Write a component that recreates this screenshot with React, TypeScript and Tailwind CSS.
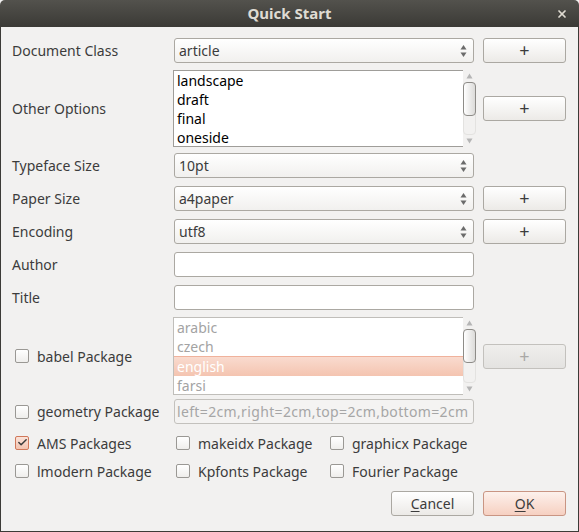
import { Check, X } from "lucide-react"

const font = { fontFamily: '"Noto Sans", "DejaVu Sans", sans-serif' }

function Arrows() {
  return (
    <svg width="7" height="14" viewBox="0 0 7 14" className="shrink-0">
      <path d="M3.5 1 L6.5 5.5 L0.5 5.5 Z" fill="#6b6b6b" />
      <path d="M3.5 13 L6.5 8.5 L0.5 8.5 Z" fill="#6b6b6b" />
    </svg>
  )
}

function Combo({ value }: { value: string }) {
  return (
    <div className="h-[25px] w-[300px] flex items-center justify-between pl-[4px] pr-[6px] rounded-[3px] border border-[#aba8a2] bg-gradient-to-b from-white to-[#f1f0ee] text-[14px] text-[#3c3c3c]">
      <span>{value}</span>
      <Arrows />
    </div>
  )
}

function PlusButton({ disabled = false }: { disabled?: boolean }) {
  return (
    <div
      className={
        disabled
          ? "h-[25px] w-[83px] flex items-center justify-center rounded-[3px] border border-[#c3c1bd] bg-gradient-to-b from-[#efeeec] to-[#e4e3e1] text-[18px] text-[#a9a8a6]"
          : "h-[25px] w-[83px] flex items-center justify-center rounded-[3px] border border-[#aba8a2] bg-gradient-to-b from-white to-[#eceae7] text-[18px] text-[#3c3c3c]"
      }
    >
      +
    </div>
  )
}

function TextInput({ value = "", muted = false }: { value?: string; muted?: boolean }) {
  return (
    <div
      className={
        muted
          ? "h-[25px] w-[300px] flex items-center px-[2px] rounded-[3px] border border-[#c3c1bd] bg-[#f4f3f2] text-[14px] tracking-[0.35px] text-[#a6a6a6] overflow-hidden whitespace-nowrap"
          : "h-[25px] w-[300px] flex items-center px-[5px] rounded-[3px] border border-[#aba8a2] bg-white text-[14px] text-[#3c3c3c]"
      }
    >
      {value}
    </div>
  )
}

function ScrollBar() {
  return (
    <div className="w-[13px] h-full flex flex-col items-center">
      <svg width="7" height="6" viewBox="0 0 7 6" className="mt-[3px] shrink-0">
        <path d="M3.5 0.5 L6.5 5.5 L0.5 5.5 Z" fill="#b5b5b5" />
      </svg>
      <div className="flex-1 w-[13px] mt-[3px] mb-[3px] flex flex-col rounded-[4px] border border-[#e3e2e0]">
        <div className="h-[34px] -mx-px -mt-px rounded-[4px] border border-[#8e8c88] bg-gradient-to-r from-white to-[#dcdbd9]" />
      </div>
      <svg width="7" height="6" viewBox="0 0 7 6" className="mb-[3px] shrink-0">
        <path d="M3.5 5.5 L6.5 0.5 L0.5 0.5 Z" fill="#b5b5b5" />
      </svg>
    </div>
  )
}

function Box({ checked = false }: { checked?: boolean }) {
  return checked ? (
    <div className="w-[14px] h-[14px] shrink-0 rounded-[2px] border border-[#d0785a] bg-gradient-to-b from-[#fbe3d9] to-[#f2c3b0] flex items-center justify-center">
      <Check size={13} strokeWidth={3.2} color="#3a3a3a" className="-mt-[2px] ml-[1px]" />
    </div>
  ) : (
    <div className="w-[14px] h-[14px] shrink-0 rounded-[2px] border border-[#9a9894] bg-gradient-to-b from-white to-[#efeeec]" />
  )
}

function CheckItem({ label, checked = false, w }: { label: string; checked?: boolean; w: string }) {
  return (
    <div className={"flex items-center gap-[8px] " + w}>
      <Box checked={checked} />
      <span>{label}</span>
    </div>
  )
}

const rowCls = "grid grid-cols-[153px_300px_83px] gap-x-[9px] items-center"

export default function App() {
  const options = ["landscape", "draft", "final", "oneside"]
  const langs = ["arabic", "czech", "english", "farsi"]

  return (
    <div className="w-[579px] h-[532px] bg-[#f2f1f0] flex flex-col" style={font}>
      {/* title bar */}
      <div className="h-[27px] shrink-0 rounded-t-[5px] bg-gradient-to-b from-[#53524d] to-[#3b3a36] flex items-center relative">
        <span className="flex-1 text-center text-[15px] font-bold text-[#dfdbd2]">Quick Start</span>
        <X size={12} strokeWidth={3.5} color="#dfdbd2" className="absolute right-[11px] top-[8px]" />
      </div>

      <div className="flex-1 flex flex-col border-x border-b border-[#3c3b37] pl-[11px] text-[14px] text-[#3c3c3c]">
        <div className={rowCls + " mt-[11px]"}>
          <span>Document Class</span>
          <Combo value="article" />
          <PlusButton />
        </div>

        <div className={rowCls + " mt-[7px]"}>
          <span>Other Options</span>
          <div className="h-[77px] w-[303px] -ml-px flex">
            <div className="w-[290px] h-full border border-[#9f9d99] border-r-0 bg-white pl-[3px] text-black overflow-hidden leading-[19px]">
              {options.map((o) => (
                <div key={o}>{o}</div>
              ))}
            </div>
            <ScrollBar />
          </div>
          <PlusButton />
        </div>

        <div className={rowCls + " mt-[6px]"}>
          <span>Typeface Size</span>
          <Combo value="10pt" />
          <span />
        </div>

        <div className={rowCls + " mt-[8px]"}>
          <span>Paper Size</span>
          <Combo value="a4paper" />
          <PlusButton />
        </div>

        <div className={rowCls + " mt-[8px]"}>
          <span>Encoding</span>
          <Combo value="utf8" />
          <PlusButton />
        </div>

        <div className={rowCls + " mt-[8px]"}>
          <span>Author</span>
          <TextInput />
          <span />
        </div>

        <div className={rowCls + " mt-[8px]"}>
          <span>Title</span>
          <TextInput />
          <span />
        </div>

        <div className={rowCls + " mt-[7px]"}>
          <div className="flex items-center gap-[8px] pl-[3px]">
            <Box />
            <span>babel Package</span>
          </div>
          <div className="h-[78px] w-[303px] -ml-px flex">
            <div className="w-[290px] h-full border border-[#c0beba] border-r-0 bg-white text-[#a3a3a3] overflow-hidden leading-[19px]">
              {langs.map((l) =>
                l === "english" ? (
                  <div key={l} className="pl-[3px] text-white border-t border-[#f0b29c] bg-gradient-to-b from-[#f9dbcf] to-[#f4c4b0]">
                    {l}
                  </div>
                ) : (
                  <div key={l} className="pl-[3px]">
                    {l}
                  </div>
                )
              )}
            </div>
            <ScrollBar />
          </div>
          <PlusButton disabled />
        </div>

        <div className={rowCls + " mt-[4px]"}>
          <div className="flex items-center gap-[8px] pl-[3px]">
            <Box />
            <span>geometry Package</span>
          </div>
          <TextInput value="left=2cm,right=2cm,top=2cm,bottom=2cm" muted />
          <span />
        </div>

        <div className="flex items-center h-[20px] mt-[9px] pl-[3px]">
          <CheckItem label="AMS Packages" checked w="w-[161px]" />
          <CheckItem label="makeidx Package" w="w-[154px]" />
          <CheckItem label="graphicx Package" w="w-[160px]" />
        </div>

        <div className="flex items-center h-[20px] mt-[8px] pl-[3px]">
          <CheckItem label="lmodern Package" w="w-[161px]" />
          <CheckItem label="Kpfonts Package" w="w-[154px]" />
          <CheckItem label="Fourier Package" w="w-[160px]" />
        </div>

        <div className="flex justify-end gap-[9px] mt-[10px] pr-[12px]">
          <div className="h-[25px] w-[83px] flex items-center justify-center rounded-[3px] border border-[#aba8a2] bg-gradient-to-b from-white to-[#eceae7]">
            <span>
              <span className="underline underline-offset-2">C</span>ancel
            </span>
          </div>
          <div className="h-[25px] w-[83px] flex items-center justify-center rounded-[3px] border border-[#c99583] bg-gradient-to-b from-[#fdf1ec] to-[#f6d0c1]">
            <span>
              <span className="underline underline-offset-2">O</span>K
            </span>
          </div>
        </div>
      </div>
    </div>
  )
}
